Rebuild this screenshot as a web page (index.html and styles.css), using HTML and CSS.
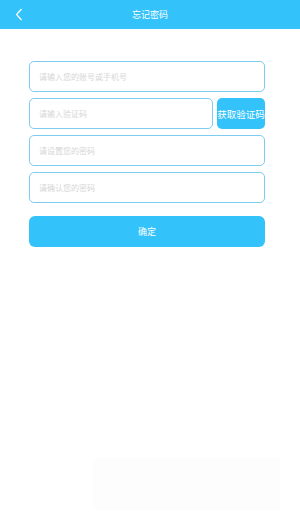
FILE: index.html
```html
<!DOCTYPE html>
<html lang="zh-CN">
<head>
  <meta charset="UTF-8">
  <meta name="viewport" content="width=device-width, initial-scale=1.0">
  <title>忘记密码</title>
  <link rel="stylesheet" href="styles.css">
</head>
<body>
  <div class="header">
    <span class="back">
      <svg width="8" height="13" viewBox="0 0 8 13"><path d="M6.5 1 L1.5 6.5 L6.5 12" fill="none" stroke="#fff" stroke-width="1.2"/></svg>
    </span>
    <span class="title">忘记密码</span>
  </div>

  <div class="form">
    <input type="text" class="field" placeholder="请输入您的账号或手机号">
    <div class="code-row">
      <input type="text" class="field" placeholder="请输入验证码">
      <button class="code-btn">获取验证码</button>
    </div>
    <input type="password" class="field" placeholder="请设置您的密码">
    <input type="password" class="field" placeholder="请确认您的密码">
    <button class="submit">确定</button>
  </div>

  <div class="ghost"></div>
</body>
</html>
```
FILE: styles.css
```css
body {
  margin: 0;
  background: #fff;
  font-family: "Noto Sans CJK SC", "Noto Sans", sans-serif;
}
.header {
  height: 29px;
  background: #33c2fa;
  display: flex;
  align-items: center;
  justify-content: center;
  position: relative;
}
.back {
  position: absolute;
  left: 15px;
  top: 8px;
  display: flex;
}
.title {
  color: #fff;
  font-size: 9px;
}
.form {
  display: flex;
  flex-direction: column;
  gap: 6px;
  padding: 32px 35px 0 29px;
}
.field {
  height: 31px;
  box-sizing: border-box;
  border: 1.5px solid #7ccdef;
  border-radius: 5px;
  padding: 0 9px;
  font-family: inherit;
  font-size: 8px;
  outline: none;
  width: 100%;
}
.field::placeholder {
  color: #d6d6d6;
}
.code-row {
  display: flex;
  gap: 4px;
}
.code-row .field {
  flex: 1;
  width: auto;
}
.code-btn {
  width: 48px;
  height: 31px;
  border: none;
  border-radius: 5px;
  background: #33c2fa;
  color: #fff;
  font-family: inherit;
  font-size: 9.5px;
  padding: 0;
  white-space: nowrap;
}
.submit {
  margin-top: 7px;
  height: 31px;
  border: none;
  border-radius: 6px;
  background: #33c2fa;
  color: #fff;
  font-family: inherit;
  font-size: 9px;
}
.ghost {
  margin: 211px 20px 0 93px;
  height: 52px;
  background: #fdfdfd;
}
```
